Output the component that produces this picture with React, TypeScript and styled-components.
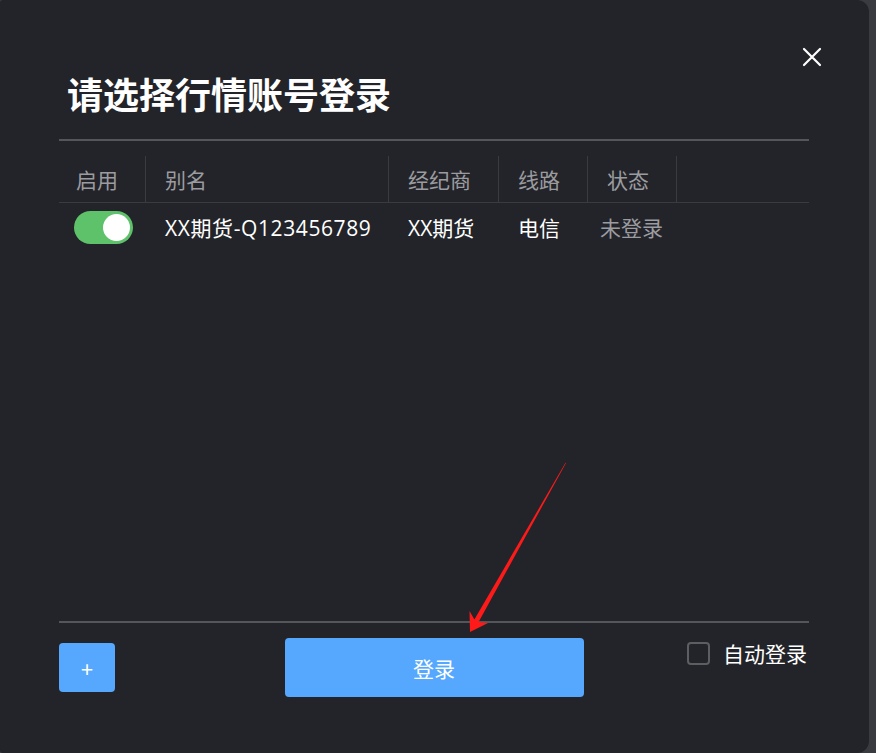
import React from "react";
import styled, { createGlobalStyle } from "styled-components";

const Global = createGlobalStyle`
  html, body { margin: 0; padding: 0; background: #3a3b40; }
  body { font-family: "Open Sans", "Noto Sans CJK SC", sans-serif; overflow: hidden; }
  * { box-sizing: border-box; }
`;

const Page = styled.div`
  width: 876px;
  height: 753px;
  display: flex;
  background: #3a3b40;
`;

const Dialog = styled.div`
  position: relative;
  width: 869px;
  height: 753px;
  background: #232429;
  border-radius: 3px 12px 12px 3px;
  display: flex;
  flex-direction: column;
  padding: 0 60px 0 59px;
`;

const Title = styled.h1`
  margin: 0;
  padding: 75px 0 0 8px;
  height: 139px;
  font-family: "Noto Sans CJK SC", sans-serif;
  font-size: 36px;
  line-height: 36px;
  font-weight: 700;
  color: #ffffff;
`;

const Close = styled.button`
  position: absolute;
  top: 46px;
  right: 46px;
  width: 22px;
  height: 22px;
  padding: 0;
  border: none;
  background: transparent;
  display: flex;
  align-items: center;
  justify-content: center;
`;

const Divider = styled.div`
  height: 2px;
  background: #55565a;
`;

const Table = styled.div`
  margin-top: 15px;
  display: flex;
  flex-direction: column;
`;

const Row = styled.div<{ $head?: boolean }>`
  display: grid;
  grid-template-columns: 87px 243px 110px 89px 89px 1fr;
  height: ${(p) => (p.$head ? "47px" : "48px")};
  border-bottom: ${(p) => (p.$head ? "1px solid #3a3b40" : "none")};
`;

const Cell = styled.div<{ $head?: boolean; $sep?: boolean; $muted?: boolean; $pad?: number; $wide?: boolean }>`
  display: flex;
  align-items: center;
  padding-left: ${(p) => p.$pad ?? 19}px;
  font-size: 21px;
  letter-spacing: ${(p) => (p.$wide ? "0.6px" : "0")};
  color: ${(p) => (p.$head || p.$muted ? "#9b9ca0" : "#ffffff")};
  border-right: ${(p) => (p.$sep ? "1px solid #3a3b40" : "none")};
  white-space: nowrap;
`;

const Toggle = styled.div`
  width: 59px;
  height: 33px;
  border-radius: 17px;
  background: #5ec26a;
  display: flex;
  align-items: center;
  justify-content: flex-end;
  padding-right: 3px;
`;

const Knob = styled.div`
  width: 27px;
  height: 27px;
  border-radius: 50%;
  background: #ffffff;
`;

const Spacer = styled.div`
  flex: 1;
`;

const Footer = styled.div`
  display: grid;
  grid-template-columns: 1fr auto 1fr;
  align-items: start;
  padding: 15px 0 56px;
`;

const AddButton = styled.button`
  margin-top: 5px;
  width: 56px;
  height: 49px;
  border: none;
  border-radius: 4px;
  background: #55a8fd;
  color: #ffffff;
  font-size: 22px;
  font-family: "Noto Sans", sans-serif;
  display: flex;
  align-items: center;
  justify-content: center;
  padding: 0;
`;

const LoginButton = styled.button`
  width: 299px;
  height: 59px;
  border: none;
  border-radius: 4px;
  background: #55a8fd;
  color: #ffffff;
  font-size: 21px;
  font-family: "Noto Sans CJK SC", sans-serif;
  padding: 0;
`;

const AutoLogin = styled.label`
  justify-self: end;
  display: flex;
  align-items: center;
  gap: 13px;
  font-size: 21px;
  color: #ffffff;
  margin-right: 2px;
`;

const Box = styled.span`
  width: 23px;
  height: 23px;
  border: 2px solid #5d5e62;
  border-radius: 4px;
`;

const Arrow = styled.svg`
  position: absolute;
  left: 460px;
  top: 455px;
  width: 115px;
  height: 185px;
  pointer-events: none;
`;

export default function App() {
  return (
    <Page>
      <Global />
      <Dialog>
        <Title>请选择行情账号登录</Title>
        <Close aria-label="close">
          <svg width="20" height="20" viewBox="0 0 20 20">
            <path d="M2 2 L18 18 M18 2 L2 18" stroke="#ffffff" strokeWidth="2.2" strokeLinecap="round" />
          </svg>
        </Close>
        <Divider />
        <Table>
          <Row $head>
            <Cell $head $sep $pad={17}>启用</Cell>
            <Cell $head $sep>别名</Cell>
            <Cell $head $sep>经纪商</Cell>
            <Cell $head $sep>线路</Cell>
            <Cell $head $sep>状态</Cell>
            <Cell $head />
          </Row>
          <Row>
            <Cell $pad={15}>
              <Toggle>
                <Knob />
              </Toggle>
            </Cell>
            <Cell $wide>XX期货-Q123456789</Cell>
            <Cell>XX期货</Cell>
            <Cell>电信</Cell>
            <Cell $muted $pad={12}>未登录</Cell>
            <Cell />
          </Row>
        </Table>
        <Spacer />
        <Divider />
        <Footer>
          <div>
            <AddButton>+</AddButton>
          </div>
          <LoginButton>登录</LoginButton>
          <AutoLogin>
            <Box />
            自动登录
          </AutoLogin>
        </Footer>
        <Arrow viewBox="0 0 115 185">
          <polygon
            points="106,8 18.6,166.9 28,168 10,177 9.5,156 14.4,164.4 105.5,7.7"
            fill="#ff1a1a"
          />
        </Arrow>
      </Dialog>
    </Page>
  );
}
